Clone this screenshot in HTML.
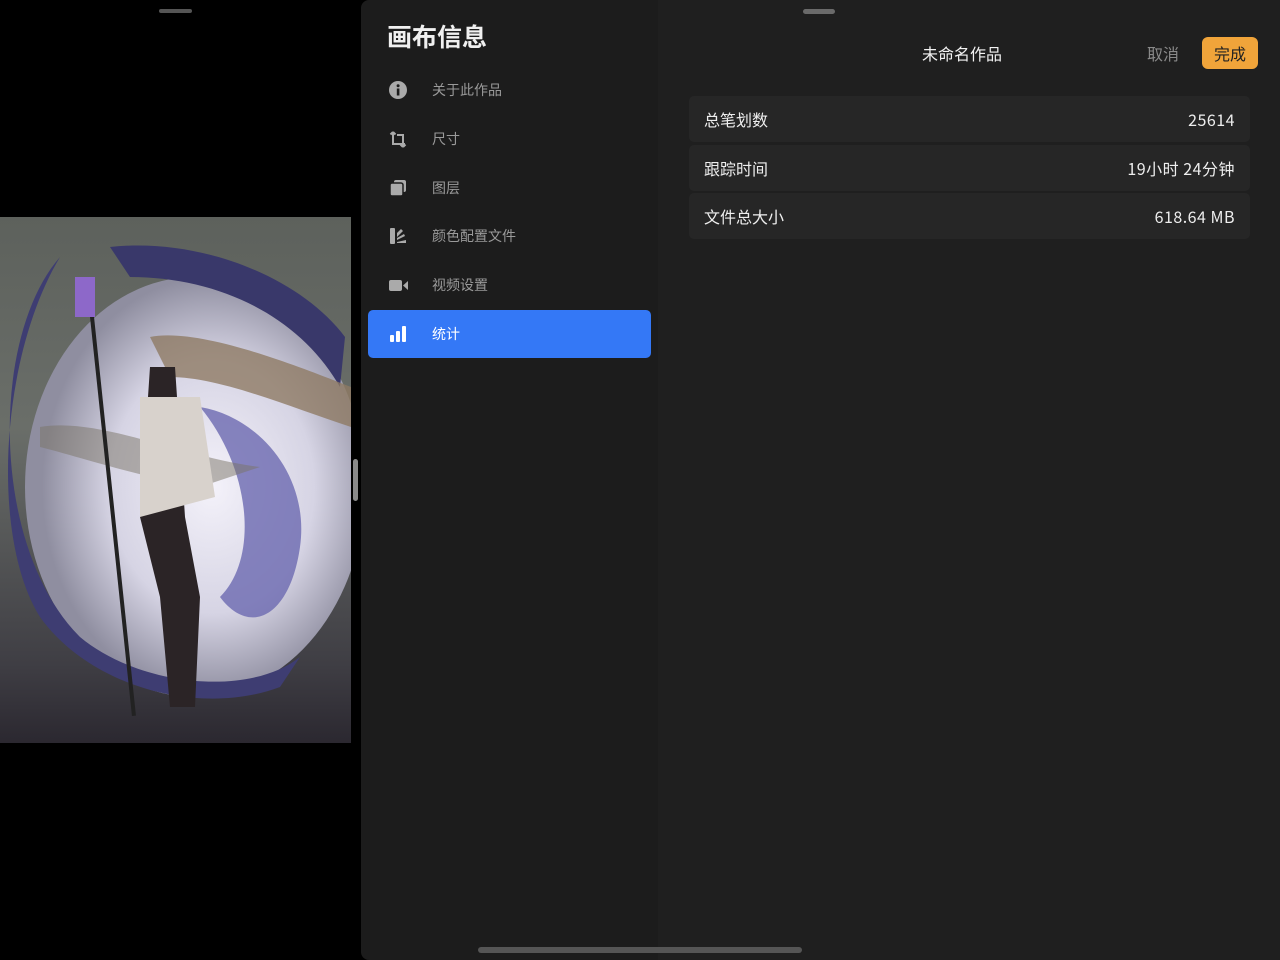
<!DOCTYPE html>
<html><head><meta charset="utf-8">
<style>
*{margin:0;padding:0;box-sizing:border-box}
body{width:1280px;height:960px;background:#000;position:relative;overflow:hidden;font-family:"Noto Sans CJK SC","Liberation Sans",sans-serif;color:#e8e8e8}
.abs{position:absolute}
#art{left:0;top:217px;width:351px;height:526px;overflow:hidden;background:linear-gradient(180deg,#5d615c 0%,#6a6e69 40%,#3f3e44 85%,#2b2830 100%)}
#side{left:361px;top:0;width:297px;height:960px;background:#1c1c1c;border-radius:8px 0 0 8px}
#main{left:658px;top:0;width:622px;height:960px;background:#1f1f1f}
.item{position:absolute;left:7px;width:283px;height:48px;font-size:14px;color:#9a9a9a}
.item span{position:absolute;left:64px;top:0;line-height:48px}
.item svg{position:absolute;left:21px;top:15px}
.row{position:absolute;left:31px;width:561px;height:46px;background:#262626;border-radius:5px;font-size:16px;color:#eee;line-height:46px}
.row .l{position:absolute;left:15px;top:0}
.row .r{position:absolute;right:15px;top:0;letter-spacing:0.5px}
</style></head><body>
<div class="abs" style="left:159px;top:9px;width:33px;height:4px;border-radius:2px;background:#555"></div>
<div id="art" class="abs">
<svg width="351" height="526" viewBox="0 0 351 526">
<defs><radialGradient id="g" cx="55%" cy="50%" r="50%"><stop offset="0" stop-color="#f4f2fa"/><stop offset="0.6" stop-color="#d6d4e4"/><stop offset="1" stop-color="#8f8ea0"/></radialGradient></defs>
<ellipse cx="195" cy="270" rx="170" ry="210" fill="url(#g)"/>
<path d="M60 40 C-10 120,-10 330,80 420 C140 470,250 480,300 440 L280 470 C200 500,90 470,40 400 C-10 320,0 140,60 40Z" fill="#3e3d72"/>
<path d="M110 30 C200 20,300 60,345 120 L340 170 C300 100,220 60,130 60Z" fill="#39386a"/>
<path d="M200 190 C260 200,310 260,300 330 C290 400,250 420,220 380 C260 340,250 250,200 190Z" fill="#6b69b0" opacity="0.8"/>
<path d="M150 120 C200 110,300 150,351 170 L351 210 C290 190,220 160,170 160Z" fill="#8f7a64" opacity="0.8"/>
<path d="M40 210 C100 200,180 240,260 250 L200 270 C140 260,80 240,40 230Z" fill="#7a7466" opacity="0.5"/>
<rect x="110" y="80" width="4" height="420" fill="#222" transform="rotate(-6 112 290)"/>
<rect x="75" y="60" width="20" height="40" fill="#8d68c9"/>
<path d="M150 150 L175 150 L185 300 L200 380 L195 490 L170 490 L160 380 L140 300Z" fill="#2b2426"/>
<path d="M140 180 L200 180 L215 280 L140 300Z" fill="#d8d2cc"/>
</svg>
</div>
<div class="abs" style="left:353px;top:459px;width:5px;height:42px;border-radius:3px;background:#8a8a8a"></div>

<div id="side" class="abs">
<div class="abs" style="left:26px;top:17px;font-size:25px;line-height:38px;font-weight:bold;color:#f0f0f0">画布信息</div>
<div class="item" style="top:66px"><svg width="18" height="18" viewBox="0 0 18 18"><circle cx="9" cy="9" r="9" fill="#aaa"/><rect x="7.8" y="7.5" width="2.6" height="7" fill="#1c1c1c"/><circle cx="9.1" cy="4.8" r="1.5" fill="#1c1c1c"/></svg><span>关于此作品</span></div>
<div class="item" style="top:115px"><svg width="18" height="18" viewBox="0 0 18 18" fill="none" stroke="#aaa" stroke-width="2"><path d="M4 2V14H16M4 2L1.5 4.5M4 2L6.5 4.5M8 5H14V17M14 17L11.5 14.5M14 17L16.5 14.5"/></svg><span>尺寸</span></div>
<div class="item" style="top:164px"><svg width="18" height="18" viewBox="0 0 18 18"><rect x="5" y="1" width="12" height="12" rx="2" fill="#aaa"/><rect x="1" y="4" width="13" height="13" rx="2" fill="#aaa" stroke="#1c1c1c" stroke-width="1.5"/></svg><span>图层</span></div>
<div class="item" style="top:212px"><svg width="18" height="18" viewBox="0 0 18 18" fill="#aaa"><rect x="1" y="1" width="5" height="16" rx="1"/><path d="M8 6L12 2L14 4L8 10Z"/><path d="M8 11L15 7L16 9L8 13Z"/><path d="M8 15L17 13L17 16H8Z"/></svg><span>颜色配置文件</span></div>
<div class="item" style="top:261px"><svg width="20" height="18" viewBox="0 0 20 18" fill="#aaa"><rect x="0" y="4" width="13" height="11" rx="2"/><path d="M14 9.5L19 5V14Z"/></svg><span>视频设置</span></div>
<div class="item" style="top:310px;background:#3478f6;border-radius:5px;color:#fff"><svg width="18" height="18" viewBox="0 0 18 18" fill="#fff"><rect x="1" y="10" width="4" height="7" rx="1"/><rect x="7" y="6" width="4" height="11" rx="1"/><rect x="13" y="1" width="4" height="16" rx="1"/></svg><span>统计</span></div>
</div>

<div id="main" class="abs">
<div class="abs" style="left:145px;top:9px;width:32px;height:5px;border-radius:3px;background:#6a6a6a"></div>
<div class="abs" style="left:264px;top:40px;font-size:16px;line-height:26px;color:#f2f2f2">未命名作品</div>
<div class="abs" style="left:489px;top:40px;font-size:16px;line-height:26px;color:#8a8a8a">取消</div>
<div class="abs" style="left:544px;top:37px;width:56px;height:32px;border-radius:6px;background:#f0a43a;color:#222;font-size:16px;text-align:center;line-height:32px">完成</div>
<div class="row" style="top:96px"><span class="l">总笔划数</span><span class="r">25614</span></div>
<div class="row" style="top:145px"><span class="l">跟踪时间</span><span class="r">19小时 24分钟</span></div>
<div class="row" style="top:193px"><span class="l">文件总大小</span><span class="r">618.64 MB</span></div>
</div>
<div class="abs" style="left:478px;top:947px;width:324px;height:6px;border-radius:3px;background:#555"></div>
</body></html>
